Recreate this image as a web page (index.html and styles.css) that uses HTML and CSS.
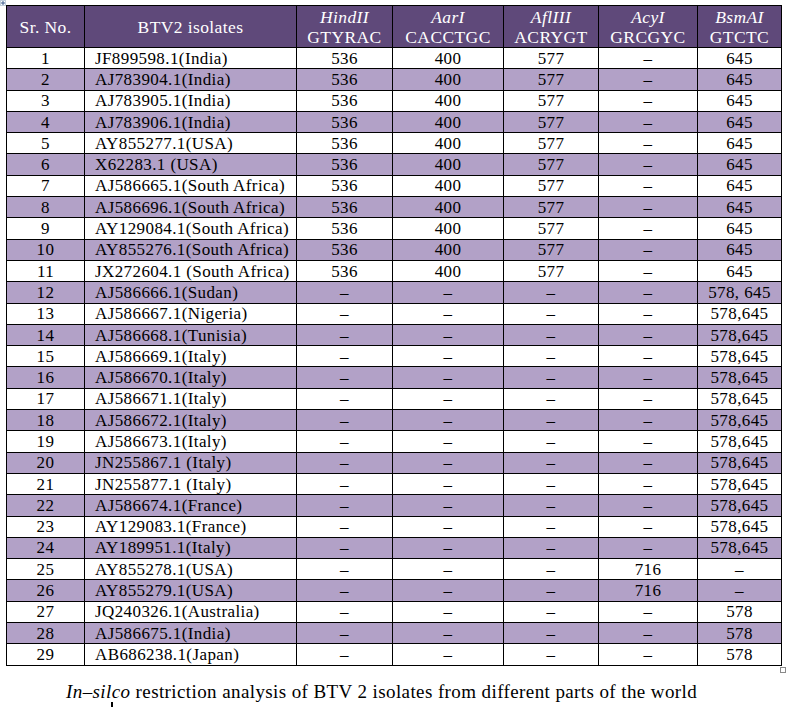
FILE: index.html
```html
<!DOCTYPE html>
<html>
<head>
<meta charset="utf-8">
<link rel="stylesheet" href="styles.css">
</head>
<body>
<div class="page">
  <span class="move-handle"><svg width="6" height="6" viewBox="0 0 6 6"><rect x="0.5" y="0.5" width="5" height="5" fill="#fff" stroke="#7f9db9" stroke-width="1" stroke-dasharray="1 1"/><path d="M3 1v4M1 3h4" stroke="#3a5a8c" stroke-width="1"/></svg></span>
  <table class="data">
    <colgroup>
      <col class="c-sr"><col class="c-iso"><col class="c-hind"><col class="c-aar"><col class="c-afl"><col class="c-acy"><col class="c-bsm">
    </colgroup>
    <thead>
      <tr>
        <th>Sr. No.</th>
        <th>BTV2 isolates</th>
        <th><i>HindII</i><br>GTYRAC</th>
        <th><i>AarI</i><br>CACCTGC</th>
        <th><i>AflIII</i><br>ACRYGT</th>
        <th><i>AcyI</i><br>GRCGYC</th>
        <th><i>BsmAI</i><br>GTCTC</th>
      </tr>
    </thead>
    <tbody>
      <tr><td>1</td><td class="iso">JF899598.1(India)</td><td>536</td><td>400</td><td>577</td><td>–</td><td>645</td></tr>
      <tr><td>2</td><td class="iso">AJ783904.1(India)</td><td>536</td><td>400</td><td>577</td><td>–</td><td>645</td></tr>
      <tr><td>3</td><td class="iso">AJ783905.1(India)</td><td>536</td><td>400</td><td>577</td><td>–</td><td>645</td></tr>
      <tr><td>4</td><td class="iso">AJ783906.1(India)</td><td>536</td><td>400</td><td>577</td><td>–</td><td>645</td></tr>
      <tr><td>5</td><td class="iso">AY855277.1(USA)</td><td>536</td><td>400</td><td>577</td><td>–</td><td>645</td></tr>
      <tr><td>6</td><td class="iso">X62283.1 (USA)</td><td>536</td><td>400</td><td>577</td><td>–</td><td>645</td></tr>
      <tr><td>7</td><td class="iso">AJ586665.1(South Africa)</td><td>536</td><td>400</td><td>577</td><td>–</td><td>645</td></tr>
      <tr><td>8</td><td class="iso">AJ586696.1(South Africa)</td><td>536</td><td>400</td><td>577</td><td>–</td><td>645</td></tr>
      <tr><td>9</td><td class="iso">AY129084.1(South Africa)</td><td>536</td><td>400</td><td>577</td><td>–</td><td>645</td></tr>
      <tr><td>10</td><td class="iso">AY855276.1(South Africa)</td><td>536</td><td>400</td><td>577</td><td>–</td><td>645</td></tr>
      <tr><td>11</td><td class="iso">JX272604.1 (South Africa)</td><td>536</td><td>400</td><td>577</td><td>–</td><td>645</td></tr>
      <tr><td>12</td><td class="iso">AJ586666.1(Sudan)</td><td>–</td><td>–</td><td>–</td><td>–</td><td>578, 645</td></tr>
      <tr><td>13</td><td class="iso">AJ586667.1(Nigeria)</td><td>–</td><td>–</td><td>–</td><td>–</td><td>578,645</td></tr>
      <tr><td>14</td><td class="iso">AJ586668.1(Tunisia)</td><td>–</td><td>–</td><td>–</td><td>–</td><td>578,645</td></tr>
      <tr><td>15</td><td class="iso">AJ586669.1(Italy)</td><td>–</td><td>–</td><td>–</td><td>–</td><td>578,645</td></tr>
      <tr><td>16</td><td class="iso">AJ586670.1(Italy)</td><td>–</td><td>–</td><td>–</td><td>–</td><td>578,645</td></tr>
      <tr><td>17</td><td class="iso">AJ586671.1(Italy)</td><td>–</td><td>–</td><td>–</td><td>–</td><td>578,645</td></tr>
      <tr><td>18</td><td class="iso">AJ586672.1(Italy)</td><td>–</td><td>–</td><td>–</td><td>–</td><td>578,645</td></tr>
      <tr><td>19</td><td class="iso">AJ586673.1(Italy)</td><td>–</td><td>–</td><td>–</td><td>–</td><td>578,645</td></tr>
      <tr><td>20</td><td class="iso">JN255867.1 (Italy)</td><td>–</td><td>–</td><td>–</td><td>–</td><td>578,645</td></tr>
      <tr><td>21</td><td class="iso">JN255877.1 (Italy)</td><td>–</td><td>–</td><td>–</td><td>–</td><td>578,645</td></tr>
      <tr><td>22</td><td class="iso">AJ586674.1(France)</td><td>–</td><td>–</td><td>–</td><td>–</td><td>578,645</td></tr>
      <tr><td>23</td><td class="iso">AY129083.1(France)</td><td>–</td><td>–</td><td>–</td><td>–</td><td>578,645</td></tr>
      <tr><td>24</td><td class="iso">AY189951.1(Italy)</td><td>–</td><td>–</td><td>–</td><td>–</td><td>578,645</td></tr>
      <tr><td>25</td><td class="iso">AY855278.1(USA)</td><td>–</td><td>–</td><td>–</td><td>716</td><td>–</td></tr>
      <tr><td>26</td><td class="iso">AY855279.1(USA)</td><td>–</td><td>–</td><td>–</td><td>716</td><td>–</td></tr>
      <tr><td>27</td><td class="iso">JQ240326.1(Australia)</td><td>–</td><td>–</td><td>–</td><td>–</td><td>578</td></tr>
      <tr><td>28</td><td class="iso">AJ586675.1(India)</td><td>–</td><td>–</td><td>–</td><td>–</td><td>578</td></tr>
      <tr><td>29</td><td class="iso">AB686238.1(Japan)</td><td>–</td><td>–</td><td>–</td><td>–</td><td>578</td></tr>
    </tbody>
  </table>
  <span class="resize-handle"></span>
  <p class="caption"><i>In–silco</i> restriction analysis of BTV 2 isolates from different parts of the world</p>
  <span class="cursor"></span>
</div>
</body>
</html>
```

FILE: styles.css
```css
html, body {
  margin: 0;
  padding: 0;
  background: #ffffff;
}

.page {
  position: relative;
  width: 786px;
  height: 720px;
  padding-top: 5px;
  box-sizing: border-box;
  font-family: "Liberation Serif", "Times New Roman", serif;
  color: #000;
}

.move-handle {
  position: absolute;
  left: 0;
  top: 0;
  width: 6px;
  height: 6px;
  line-height: 0;
}

.data {
  margin-left: 6px;
  border-collapse: collapse;
  table-layout: fixed;
  width: 776px;
  font-size: 17px;
  letter-spacing: 0.4px;
}

.c-sr { width: 78px; }
.c-iso { width: 212px; }
.c-hind { width: 96px; }
.c-aar { width: 111px; }
.c-afl { width: 95px; }
.c-acy { width: 99px; }
.c-bsm { width: 84px; }

.data th,
.data td {
  border: 1px solid #000;
  padding: 0;
  text-align: center;
  vertical-align: middle;
  white-space: nowrap;
}

.data th {
  background: #5f497a;
  color: #ffffff;
  font-weight: normal;
  font-size: 17.5px;
  height: 41px;
  line-height: 20px;
}

.data td {
  height: 20.3px;
  line-height: 19px;
}

.data td.iso {
  text-align: left;
  padding-left: 10px;
}

.data tbody tr:nth-child(even) td {
  background: #b2a1c7;
}

.resize-handle {
  position: absolute;
  left: 780px;
  top: 667px;
  width: 4px;
  height: 4px;
  border: 1px solid #8a8a8a;
  background: #fff;
}

.caption {
  margin: 0;
  padding-top: 14px;
  padding-left: 66px;
  font-size: 19px;
  line-height: 24px;
  letter-spacing: 0.4px;
}

.cursor {
  position: absolute;
  left: 111px;
  top: 702px;
  width: 2px;
  height: 5px;
  background: #000;
}
```
